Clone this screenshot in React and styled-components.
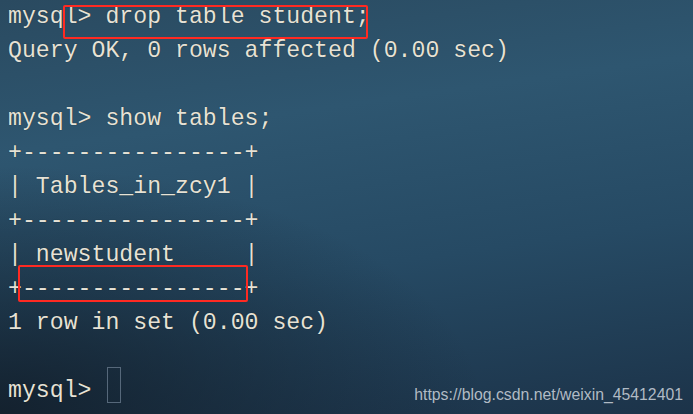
import React from 'react';
import styled, { createGlobalStyle } from 'styled-components';

const GlobalStyle = createGlobalStyle`
  html, body {
    margin: 0;
    padding: 0;
    background: #1b2d3e;
  }
`;

const Screen = styled.div`
  position: relative;
  width: 693px;
  height: 414px;
  overflow: hidden;
  box-sizing: border-box;
  padding: 0 8px;
  background:
    radial-gradient(ellipse 70% 60% at 0% 100%, rgba(18, 30, 42, 0.9) 0%, rgba(18, 30, 42, 0) 100%),
    linear-gradient(172deg, #2a4a60 0%, #2e5670 30%, #264a64 62%, #1c3349 100%);
`;

const Line = styled.div`
  height: 34px;
  line-height: 34px;
  font-family: "Liberation Mono", "DejaVu Sans Mono", monospace;
  font-size: 23.2px;
  color: #e6e2d6;
  white-space: pre;
  text-shadow: 0 0 1px rgba(0, 0, 0, 0.6);
`;

const Cursor = styled.span`
  display: inline-block;
  width: 14px;
  height: 36px;
  margin: -7px 0 0 2px;
  vertical-align: top;
  box-sizing: border-box;
  border: 1.5px solid #56687a;
`;

const Highlight = styled.div`
  position: absolute;
  left: ${p => p.x}px;
  top: ${p => p.y}px;
  width: ${p => p.w}px;
  height: ${p => p.h}px;
  box-sizing: border-box;
  border: 2px solid #ff2a22;
  border-radius: 2px;
`;

const Watermark = styled.div`
  position: absolute;
  right: 10px;
  bottom: 10px;
  font-family: "Liberation Sans", Arial, sans-serif;
  font-size: 15.8px;
  color: rgba(205, 212, 220, 0.85);
`;

const lines = [
  'mysql> drop table student;',
  'Query OK, 0 rows affected (0.00 sec)',
  '',
  'mysql> show tables;',
  '+----------------+',
  '| Tables_in_zcy1 |',
  '+----------------+',
  '| newstudent     |',
  '+----------------+',
  '1 row in set (0.00 sec)',
  '',
];

const App = () => {
  return (
    <Screen>
      <GlobalStyle />
      {lines.map((text, i) => (
        <Line key={i}>{text}</Line>
      ))}
      <Line>
        mysql&gt; <Cursor />
      </Line>
      <Highlight x={63} y={5} w={305} h={34} />
      <Highlight x={18} y={265} w={230} h={37} />
      <Watermark>https://blog.csdn.net/weixin_45412401</Watermark>
    </Screen>
  );
};

export default App;
